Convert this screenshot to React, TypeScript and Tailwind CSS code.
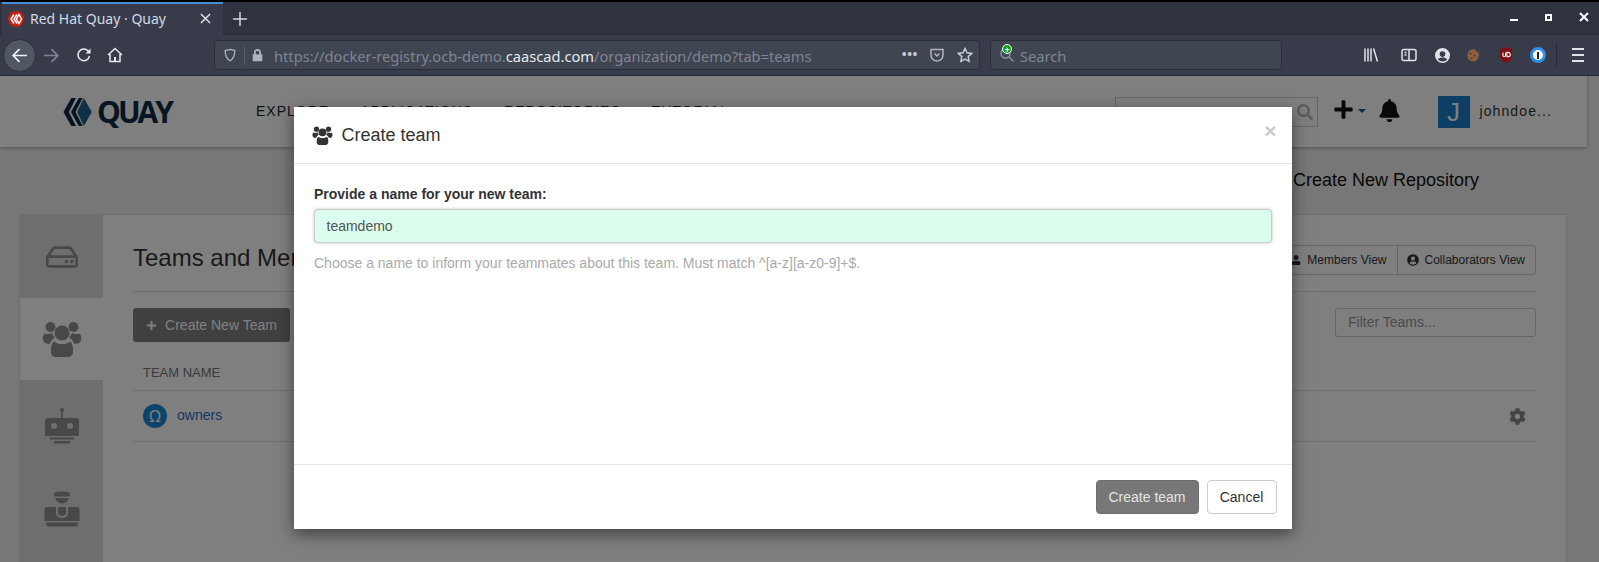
import { FaBell, FaCog, FaPlus, FaRegHdd, FaSearch, FaUser, FaUserCircle } from "react-icons/fa";

const UsersIcon = ({ className }: { className: string }) => (
  <svg viewBox="0 0 40 36" className={className} fill="currentColor">
    <circle cx="8.5" cy="6" r="5" />
    <circle cx="31.5" cy="6" r="5" />
    <path d="M3 12.5c-3 1.5-3 7 0 9.5 1 .8 3 1 5 .5 1-3 3-5 5-6-1.500-1.500-2.500-3-2.800-4.500-2.500 1-5 1.500-7.200.5z" />
    <path d="M37 12.500c3 1.500 3 7 0 9.500-1 .8-3 1-5 .5-1-3-3-5-5-6 1.500-1.500 2.500-3 2.800-4.500 2.500 1 5 1.500 7.200.5z" />
    <circle cx="20" cy="12" r="7.500" />
    <path d="M12 20.500c2 2 5 2.700 8 2.700s6-.7 8-2.700c1.800 1 3 4 3 8.500v2c0 2.800-2 5-5 5H14c-3 0-5-2.200-5-5v-2c0-4.500 1.200-7.500 3-8.500z" />
  </svg>
);

const RobotIcon = ({ className }: { className: string }) => (
  <svg viewBox="0 0 36 36" className={className} fill="currentColor">
    <circle cx="18" cy="2" r="2" />
    <rect x="17.200" y="3" width="1.600" height="7" />
    <path d="M4 10h28a3 3 0 0 1 3 3v15H1V13a3 3 0 0 1 3-3z" />
    <rect x="6" y="29.500" width="24" height="2" />
    <rect x="10" y="33" width="16" height="2.500" />
    <circle cx="10" cy="18" r="3" fill="#dddddd" />
    <circle cx="26" cy="18" r="3" fill="#dddddd" />
  </svg>
);

const AgentIcon = ({ className }: { className: string }) => (
  <svg viewBox="0 0 36 36" className={className} fill="currentColor">
    <path d="M11 1.500C13 .3 23 .3 25 1.500c1.200.7 1.200 3 .5 4H10.500c-.7-1-.7-3.300.500-4z" />
    <path d="M11.500 7h13c-.5 3-3 5.500-6.500 5.500S12 10 11.500 7z" />
    <path d="M3 16h9v6c0 3 2.500 5 6 5s6-2 6-5v-6h9c1.500 0 2.500 1 2.500 2.500V30H.5V18.500C.5 17 1.500 16 3 16z" />
    <path d="M14 16h8v6c0 1.500-1.500 3-4 3s-4-1.500-4-3z" />
    <path d="M2 31.500h32V33c0 1.500-1 2.500-2.500 2.500h-27C3 35.500 2 34.500 2 33z" />
  </svg>
);

const QuayMark = () => (
  <svg viewBox="0 0 36 32" className="h-[28px] w-[30px]" preserveAspectRatio="none">
    <path d="M10 0h5.500L7 16l8.500 16H10L.5 16z" fill="#0d2b45" />
    <path d="M19 0h4.500L15 16l8.500 16H19L9.500 16z" fill="#0d2b45" />
    <path d="M25 0l9.500 16L25 32l-8-16z" fill="#1c6289" />
  </svg>
);

const ChromeIcon = ({ children, className = "h-4 w-4" }: { children: React.ReactNode; className?: string }) => (
  <svg viewBox="0 0 16 16" className={className} fill="none" stroke="currentColor" strokeWidth="1.500">
    {children}
  </svg>
);

const navLinks = ["EXPLORE", "APPLICATIONS", "REPOSITORIES", "TUTORIAL"];

function BrowserChrome() {
  return (
    <div className="font-['Noto_Sans',sans-serif] text-[#d3dae3]">
      <div className="h-[2px] bg-black" />
      <div className="flex h-[33px] items-stretch border-b border-[#262933] bg-[#2f333f]">
        <div className="ml-[2px] flex w-[221px] items-center border-t-2 border-[#4b8bd6] bg-[#383c4a] pb-[2px] pl-[6px] pr-3 -mb-px">
          <svg viewBox="0 0 16 16" className="h-4 w-4">
            <circle cx="8" cy="8" r="8" fill="#c4200e" />
            <path d="M6 3.500L3 8l3 4.500M9 3.500L6 8l3 4.500M11 3.500L13.500 8 11 12.500 8.500 8z" fill="none" stroke="#fff" strokeWidth="1.500" />
          </svg>
          <span className="ml-[6px] flex-1 text-[14px] text-[#d3dae3]">Red Hat Quay · Quay</span>
          <svg viewBox="0 0 12 12" className="h-[11px] w-[11px]" stroke="#e4e8ee" strokeWidth="1.500">
            <path d="M1 1l10 10M11 1L1 11" />
          </svg>
        </div>
        <svg viewBox="0 0 16 16" className="ml-[9px] mt-[9px] h-4 w-4" stroke="#d3dae3" strokeWidth="1.500">
          <path d="M8 1v14M1 8h14" />
        </svg>
        <div className="ml-auto mr-[10px] flex items-center gap-[27px] pb-[2px]">
          <div className="mt-[6px] h-[2px] w-2 bg-white" />
          <div className="flex h-[7px] w-[7px] items-center justify-center bg-white">
            <div className="h-[3px] w-[3px] bg-[#2f333f]" />
          </div>
          <svg viewBox="0 0 10 10" className="h-[10px] w-[10px]" stroke="white" strokeWidth="2">
            <path d="M1 1l8 8M9 1L1 9" />
          </svg>
        </div>
      </div>
      <div className="flex h-[41px] items-center border-b border-[#262933] bg-[#383c4a] pl-[3px]">
        <div className="flex h-[33px] w-[33px] items-center justify-center rounded-full border border-[#2b2e39] bg-[#525764]">
          <svg viewBox="0 0 16 16" className="h-[17px] w-[17px]" fill="none" stroke="#eef1f5" strokeWidth="1.600">
            <path d="M15 8H2M8 2L2 8l6 6" />
          </svg>
        </div>
        <svg viewBox="0 0 16 16" className="ml-[7px] h-[17px] w-[17px]" fill="none" stroke="#7f8490" strokeWidth="1.600">
          <path d="M1 8h13M8 2l6 6-6 6" />
        </svg>
        <ChromeIcon className="ml-[16px] h-4 w-4 text-[#e6e9ee]">
          <path d="M13.500 9a5.800 5.800 0 1 1-1.500-5.200L14 6" />
          <path d="M14.500 1.500V6.500H9.500" fill="currentColor" stroke="none" />
        </ChromeIcon>
        <ChromeIcon className="ml-[15px] h-4 w-4 text-[#e6e9ee]">
          <path d="M1 8l7-6.500L15 8M3 7v7.500h10V7" />
          <rect x="7" y="10" width="2" height="4" fill="currentColor" stroke="none" />
        </ChromeIcon>
        <div className="ml-[91px] flex h-[30px] w-[766px] items-center rounded-[4px] border border-[#2b2e39] bg-[#404552] pl-[8px] pr-[6px] text-[14.670px]">
          <ChromeIcon className="h-[14px] w-[14px] text-[#aeb3bd]">
            <path d="M8 1.500l5.500 1.500c0 5-1.500 9-5.500 11.500C4 12 2.500 8 2.500 3z" />
          </ChromeIcon>
          <div className="ml-[7px] mr-[6px] h-[20px] w-px bg-[#555a67]" />
          <svg viewBox="0 0 14 16" className="h-[14px] w-[13px]" fill="#aeb3bd">
            <path d="M3 7V5a4 4 0 0 1 8 0v2h1.500v8h-11V7zM5 7h4V5a2 2 0 0 0-4 0z" />
          </svg>
          <span className="ml-[10px] flex-1 whitespace-nowrap pt-[1px] text-[#7f8593]">
            https://docker-registry.ocb-demo.<span className="text-[#e4e8ee]">caascad.com</span>/organization/demo?tab=teams
          </span>
          <span className="mr-[11px] text-[13px] font-bold tracking-[0.5px] text-[#c4c8d0]">•••</span>
          <ChromeIcon className="h-4 w-4 text-[#aeb3bd]">
            <path d="M2 2.500h12V8a6 6 0 0 1-12 0z" />
            <path d="M5.500 6.500L8 9l2.500-2.500" />
          </ChromeIcon>
          <ChromeIcon className="ml-[12px] h-4 w-4 text-[#c4c8d0]">
            <path d="M8 1.500l2 4.300 4.700.6-3.500 3.200.9 4.700L8 12l-4.100 2.300.9-4.700L1.300 6.400 6 5.800z" />
          </ChromeIcon>
        </div>
        <div className="relative ml-[10px] flex h-[30px] w-[292px] items-center rounded-[4px] border border-[#2b2e39] bg-[#404552] pl-[8px] text-[14.670px] text-[#7f8593]">
          <ChromeIcon className="h-4 w-4 text-[#8b909c]">
            <circle cx="6.500" cy="6.500" r="4.500" />
            <path d="M10 10l4.500 4.500" />
          </ChromeIcon>
          <div className="absolute left-[11px] top-[3px] flex h-[10px] w-[10px] items-center justify-center rounded-full border border-white bg-[#0ea50e] text-[9px] font-bold leading-none text-white">
            +
          </div>
          <span className="ml-[5px] pt-[1px]">Search</span>
        </div>
        <div className="ml-auto flex items-center">
          <ChromeIcon className="h-4 w-4 text-[#dfe3e9]">
            <path d="M2 1.500v13M5 1.500v13M8 1.500v13M10.500 1.500l4 13" />
          </ChromeIcon>
          <ChromeIcon className="ml-[22px] h-4 w-4 text-[#dfe3e9]">
            <rect x="1" y="2.500" width="14" height="11" rx="2" />
            <path d="M8 2.500v11M3.500 5.500h2M3.500 8h2" />
          </ChromeIcon>
          <svg viewBox="0 0 16 16" className="ml-[18px] h-[15px] w-[15px]" fill="#dfe3e9">
            <path d="M8 0a8 8 0 1 0 0 16A8 8 0 0 0 8 0zm0 3.500a3 3 0 1 1 0 6 3 3 0 0 1 0-6zm0 11a6.500 6.500 0 0 1-5-2.300c1-1.500 3-2 5-2s4 .5 5 2a6.500 6.500 0 0 1-5 2.300z" />
          </svg>
          <svg viewBox="0 0 16 16" className="ml-[16px] h-[15px] w-[15px]">
            <path d="M7.500 1c1 0 2 .3 2.700.8-.4 1.200.5 2.200 1.600 2 .1 1 1 1.700 2 1.500.3 3.800-1.500 9.200-6.300 9.200A6.800 6.800 0 0 1 7.500 1z" fill="#8a6240" />
            <circle cx="5" cy="6" r="1" fill="#4e3420" />
            <circle cx="9" cy="8" r="1" fill="#4e3420" />
            <circle cx="6" cy="11" r="1" fill="#4e3420" />
            <circle cx="14" cy="3" r=".7" fill="#8a6240" />
          </svg>
          <svg viewBox="0 0 16 18" className="ml-[18px] h-[16px] w-[14px]">
            <path d="M8 0l7 2.500V10c0 4-3.500 6.500-7 8-3.500-1.500-7-4-7-8V2.500z" fill="#7d0f12" />
            <path d="M4.500 6v4a2 2 0 0 0 3 0V6M9 6v5h1.500a2.500 2.500 0 0 0 0-5z" fill="none" stroke="#fff" strokeWidth="1.200" />
          </svg>
          <div className="ml-[17px] flex h-4 w-4 items-center justify-center rounded-full border-[3px] border-[#2f8de4] bg-white">
            <div className="h-[7px] w-[2px] bg-[#222]" />
          </div>
          <div className="ml-[10px] h-[24px] w-px bg-[#262933]" />
          <div className="ml-[15px] mr-[15px] flex w-[12px] flex-col gap-[4px]">
            <div className="h-[2px] bg-[#dfe3e9]" />
            <div className="h-[2px] bg-[#dfe3e9]" />
            <div className="h-[2px] bg-[#dfe3e9]" />
          </div>
        </div>
      </div>
    </div>
  );
}

function PageBehind() {
  return (
    <div className="h-[486px] overflow-hidden bg-[#eeeeee] pr-3 font-['Liberation_Sans',sans-serif] text-[#333]">
      <div className="flex h-[71px] items-center bg-white pl-[63px] shadow-[0_1px_3px_rgba(0,0,0,0.3)]">
        <div className="flex w-[193px] items-center">
          <QuayMark />
          <span className="ml-[4px] text-[30px] font-bold leading-none tracking-[-3px] text-[#0d2b45] font-['Open_Sans',sans-serif]">
            QUAY
          </span>
        </div>
        <div className="flex gap-[31px] text-[14px] tracking-[1px] text-[#222]">
          {navLinks.map((link) => (
            <span key={link}>{link}</span>
          ))}
        </div>
        <div className="ml-auto flex items-center pr-[35px]">
          <div className="flex h-[30px] w-[203px] items-center justify-end border border-[#ccc] pr-1 text-[#bbb]">
            <FaSearch size={16} />
          </div>
          <FaPlus size={21} className="mb-[4px] ml-[15px] text-[#111]" />
          <div className="mb-[2px] ml-[4px] h-0 w-0 border-x-4 border-t-4 border-x-transparent border-t-[#0d5a9b]" />
          <FaBell size={23} className="mb-[3px] ml-[12px] text-[#111]" />
          <div className="ml-[37px] flex h-[32px] w-[32px] items-center justify-center bg-[#1a7cc8] text-[26px] leading-none text-white">
            J
          </div>
          <span className="ml-[10px] text-[14px] tracking-[1.1px] text-[#333]">johndoe...</span>
        </div>
      </div>
      <div className="flex h-[67px] items-center justify-end pb-[1px] pr-[108px] text-[18px] text-[#111]">
        Create New Repository
      </div>
      <div className="ml-[19px] mr-[20px] flex h-[400px] border border-[#ddd] bg-white">
        <div className="w-[83px] shrink-0 bg-[#dddddd] text-[#909090]">
          <div className="flex h-[83px] items-center justify-center">
            <FaRegHdd size={32} />
          </div>
          <div className="flex h-[82px] items-center justify-center bg-white">
            <UsersIcon className="h-[36px] w-[40px]" />
          </div>
          <div className="flex h-[84px] items-center justify-center pt-[8px]">
            <RobotIcon className="h-[36px] w-[36px]" />
          </div>
          <div className="flex h-[82px] items-center justify-center pt-[8px]">
            <AgentIcon className="h-[36px] w-[36px]" />
          </div>
        </div>
        <div className="flex-1 px-[30px] pt-[29px]">
          <div className="flex h-[48px] items-start justify-between border-b border-[#ddd]">
            <h2 className="text-[24px] leading-[27px] text-[#333]">Teams and Members</h2>
            <div className="mt-[1px] flex h-[30px] rounded-[3px] border border-[#ccc] text-[12px] text-[#333]">
              <div className="flex items-center gap-[6px] px-[10px]">
                <FaUser size={10} />
                Members View
              </div>
              <div className="flex items-center gap-[6px] border-l border-[#ccc] pl-[9px] pr-[10px]">
                <FaUserCircle size={12} />
                Collaborators View
              </div>
            </div>
          </div>
          <div className="mt-[16px] flex items-start justify-between">
            <div className="flex h-[34px] w-[157px] items-center justify-center gap-[8px] rounded-[3px] bg-[#808080] text-[14px] text-white">
              <FaPlus size={11} />
              Create New Team
            </div>
            <div className="flex h-[29px] w-[201px] items-center rounded-[3px] border border-[#ccc] px-3 text-[14px] text-[#999]">
              Filter Teams...
            </div>
          </div>
          <div className="flex h-[49px] items-end border-b border-[#ddd] pb-[8px] pl-[10px] text-[13px] text-[#777]">
            TEAM NAME
          </div>
          <div className="flex h-[51px] items-center border-b border-[#ddd] pl-[10px] pr-[10px]">
            <div className="flex h-6 w-6 items-center justify-center rounded-full bg-[#1a88d8] font-['Noto_Sans',sans-serif] text-[16px] leading-none text-white">
              Ω
            </div>
            <span className="mb-[2px] ml-[10px] text-[14px] text-[#1f6fc9]">owners</span>
            <FaCog size={17} className="ml-auto text-[#888]" />
          </div>
        </div>
      </div>
    </div>
  );
}

function CreateTeamModal() {
  return (
    <div className="absolute inset-x-0 bottom-0 top-[76px] flex justify-center bg-black/50 pr-[14px] font-['Liberation_Sans',sans-serif]">
      <div className="mt-[31px] flex h-[422px] w-[998px] flex-col bg-white text-[#333] shadow-[0_5px_15px_rgba(0,0,0,0.5)]">
        <div className="flex h-[57px] items-center border-b border-[#e5e5e5] pl-[18px] pr-[15px]">
          <UsersIcon className="h-[19px] w-[21px] text-[#333]" />
          <h4 className="ml-[9px] text-[18px] text-[#333]">Create team</h4>
          <span className="ml-auto -mt-[10px] text-[21px] font-bold leading-none text-[#ccc]">×</span>
        </div>
        <div className="flex-1 px-[20px] pt-[20px]">
          <label className="block pl-[0.5px] text-[14px] font-bold leading-5">Provide a name for your new team:</label>
          <div className="mt-[5px] flex h-[34px] items-center rounded-[4px] border border-[#ccc] bg-[#dafded] px-3 text-[14px] text-[#555] shadow-[0_0_3px_rgba(0,0,0,0.25)]">
            teamdemo
          </div>
          <p className="mt-[10px] pl-[0.5px] text-[14px] leading-5 text-[#aaa]">
            Choose a name to inform your teammates about this team. Must match ^[a-z][a-z0-9]+$.
          </p>
        </div>
        <div className="flex h-[65px] items-start justify-end gap-2 border-t border-[#e5e5e5] pr-[15px] pt-[15px] text-[14px]">
          <button className="h-[34px] w-[103px] rounded-[4px] border border-[#6e6e6e] bg-[#777] text-[#e4e4e4]">
            Create team
          </button>
          <button className="h-[34px] w-[70px] rounded-[4px] border border-[#ccc] bg-white text-[#333]">Cancel</button>
        </div>
      </div>
    </div>
  );
}

export default function App() {
  return (
    <div className="relative h-[562px] w-[1599px] overflow-hidden">
      <BrowserChrome />
      <PageBehind />
      <CreateTeamModal />
    </div>
  );
}
